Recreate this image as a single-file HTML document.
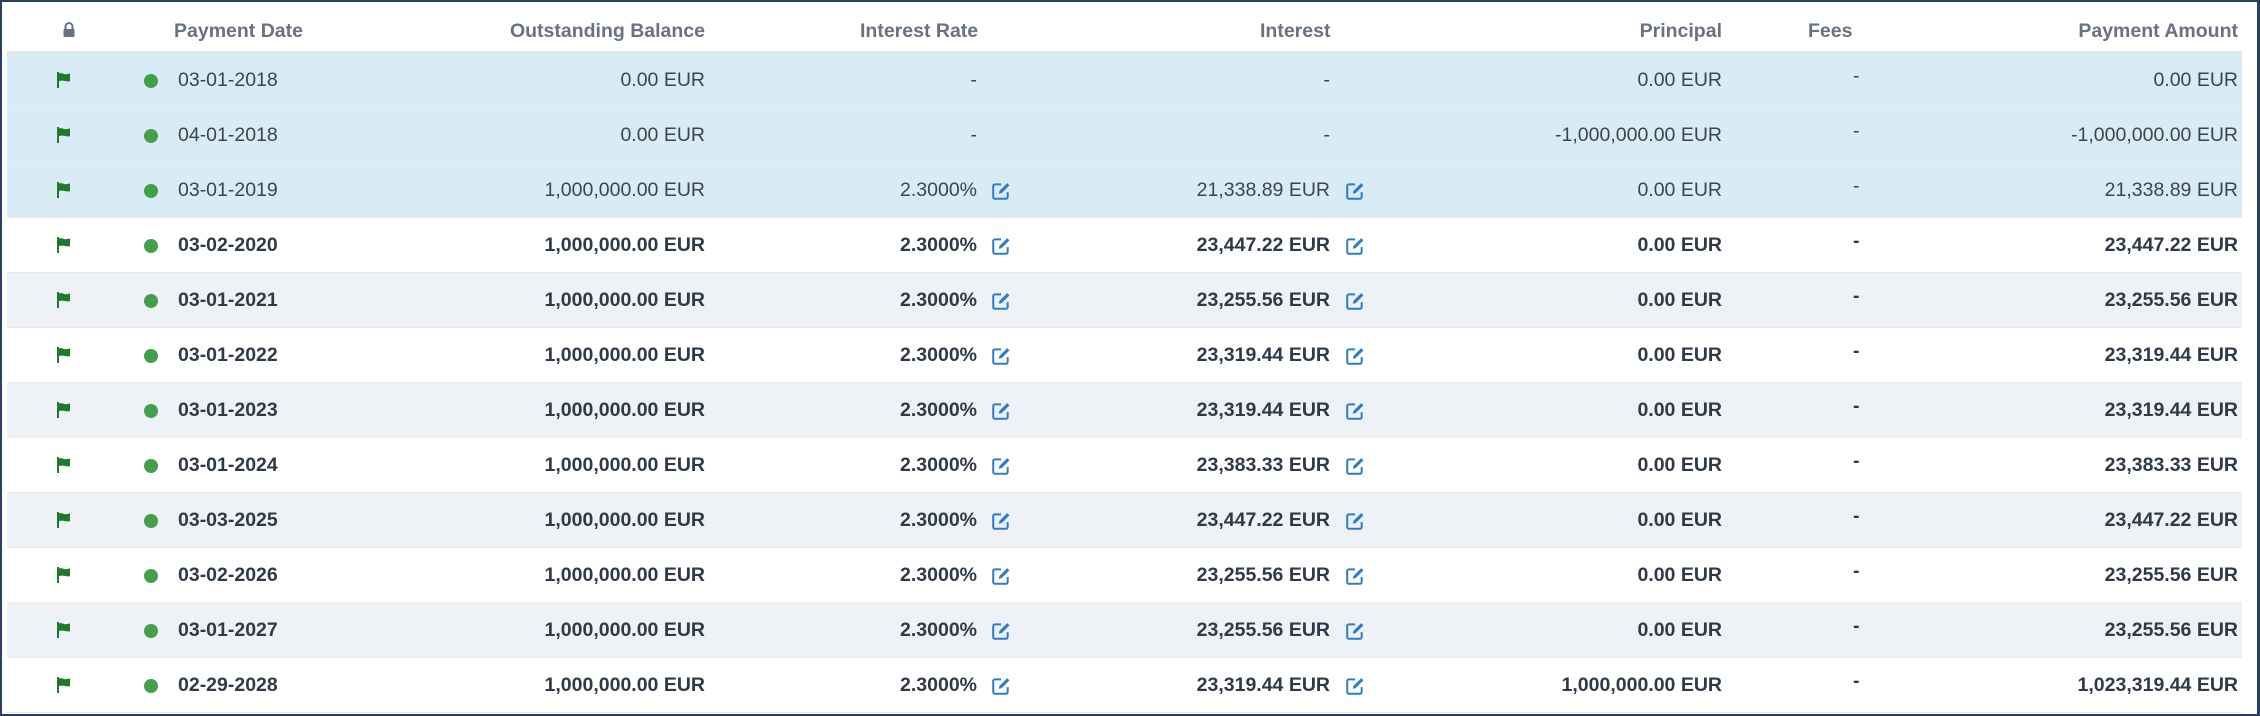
<!DOCTYPE html>
<html><head><meta charset="utf-8"><style>
*{margin:0;padding:0;box-sizing:border-box}
body{width:2260px;height:716px;overflow:hidden;background:#fff;font-family:"Liberation Sans",Arial,sans-serif;color:#3a4453}
#frame{position:absolute;left:0;top:0;width:2260px;height:716px;border:2px solid #2c3e66;border-right-width:3px}
.hdr{position:absolute;left:7px;top:2px;width:2235px;height:51px;border-bottom:2px solid #e3e7ec;font-weight:bold;color:#697280;font-size:19.5px}
.row{position:absolute;left:7px;width:2235px;height:55px;border-bottom:1px solid #e6eaee;font-size:19.5px}
.t{position:absolute;top:0;line-height:55px;white-space:nowrap}
.hdr .t{line-height:58px}
.r{text-align:right}
.dot{position:absolute;top:21px;left:137px;width:14px;height:14px;border-radius:50%;background:#44a048}
.flag{position:absolute;top:19px;left:50px}
.ed{position:absolute;top:18px}
.b{font-weight:bold;color:#2f3a49}
</style></head><body>
<div id="frame"></div>
<div class="hdr">
<svg style="position:absolute;left:55px;top:20px" width="14" height="16" viewBox="0 0 14 16"><path d="M3.5 7V4.5a3.5 3.5 0 0 1 7 0V7" fill="none" stroke="#697280" stroke-width="2"/><rect x="1.5" y="7" width="11" height="8" rx="1" fill="#697280"/></svg>
<div class="t" style="left:167px">Payment Date</div>
<div class="t r" style="right:1537px">Outstanding Balance</div>
<div class="t" style="left:853px">Interest Rate</div>
<div class="t" style="left:1253px">Interest</div>
<div class="t r" style="right:520px">Principal</div>
<div class="t" style="left:1801px">Fees</div>
<div class="t r" style="right:4px">Payment Amount</div>
</div>
<div id="rows"></div>
<script>
var data=[
["03-01-2018","0.00 EUR","-","-","0.00 EUR","0.00 EUR",0],
["04-01-2018","0.00 EUR","-","-","-1,000,000.00 EUR","-1,000,000.00 EUR",0],
["03-01-2019","1,000,000.00 EUR","2.3000%","21,338.89 EUR","0.00 EUR","21,338.89 EUR",0],
["03-02-2020","1,000,000.00 EUR","2.3000%","23,447.22 EUR","0.00 EUR","23,447.22 EUR",1],
["03-01-2021","1,000,000.00 EUR","2.3000%","23,255.56 EUR","0.00 EUR","23,255.56 EUR",1],
["03-01-2022","1,000,000.00 EUR","2.3000%","23,319.44 EUR","0.00 EUR","23,319.44 EUR",1],
["03-01-2023","1,000,000.00 EUR","2.3000%","23,319.44 EUR","0.00 EUR","23,319.44 EUR",1],
["03-01-2024","1,000,000.00 EUR","2.3000%","23,383.33 EUR","0.00 EUR","23,383.33 EUR",1],
["03-03-2025","1,000,000.00 EUR","2.3000%","23,447.22 EUR","0.00 EUR","23,447.22 EUR",1],
["03-02-2026","1,000,000.00 EUR","2.3000%","23,255.56 EUR","0.00 EUR","23,255.56 EUR",1],
["03-01-2027","1,000,000.00 EUR","2.3000%","23,255.56 EUR","0.00 EUR","23,255.56 EUR",1],
["02-29-2028","1,000,000.00 EUR","2.3000%","23,319.44 EUR","1,000,000.00 EUR","1,023,319.44 EUR",1]];
var flag='<svg class="flag" width="14" height="16" viewBox="0 0 14 16"><rect x="0" y="0" width="2" height="16" fill="#1e7a2a"/><path d="M2 1.5C5 0 7 3 10 2L13 1.5V9C10 10.5 7 7.5 2 9Z" fill="#1e7a2a"/></svg>';
function ed(x){return '<svg class="ed" style="left:'+x+'px" width="20" height="20" viewBox="0 0 18 18"><path d="M9 3H3.5a1.5 1.5 0 0 0-1.5 1.5v10A1.5 1.5 0 0 0 3.5 16h10a1.5 1.5 0 0 0 1.5-1.5V10" fill="none" stroke="#2c7bd0" stroke-width="1.8"/><path d="M7 11.5l.6-2.6 7-7 2 2-7 7z" fill="#2c7bd0"/></svg>';}
var h='';
data.forEach(function(d,i){
var top=53+i*55;var bg=i<3?'#d9ecf6':(i%2==0?'#eef1f6':'#fff');
var c=d[6]?' b':'';
h+='<div class="row" style="top:'+top+'px;background:'+bg+'">'+flag+'<div class="dot"></div>'+
'<div class="t'+c+'" style="left:171px">'+d[0]+'</div>'+
'<div class="t r'+c+'" style="right:1537px">'+d[1]+'</div>'+
'<div class="t r'+c+'" style="right:1265px">'+d[2]+'</div>'+
(d[2]!='-'?ed(984):'')+
'<div class="t r'+c+'" style="right:912px">'+d[3]+'</div>'+
(d[3]!='-'?ed(1338):'')+
'<div class="t r'+c+'" style="right:520px">'+d[4]+'</div>'+
'<div class="t'+c+'" style="left:1846px;top:-4px">-</div>'+
'<div class="t r'+c+'" style="right:4px">'+d[5]+'</div></div>';});
document.getElementById('rows').innerHTML=h;
</script>
</body></html>
